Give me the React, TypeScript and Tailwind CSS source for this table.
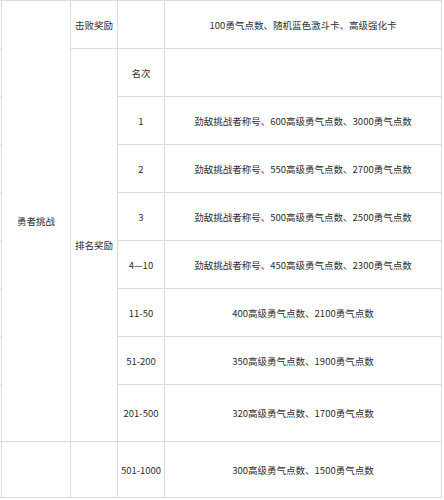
import React from "react";

const font = {
  fontFamily: '"Noto Sans CJK SC", "Noto Sans", "Liberation Sans", sans-serif',
};

const cell = "bg-white flex items-center justify-center text-[9.5px] leading-[14px] text-[#2e2e2e] text-center";

const ranks: [string, string][] = [
  ["1", "劲敌挑战者称号、600高级勇气点数、3000勇气点数"],
  ["2", "劲敌挑战者称号、550高级勇气点数、2700勇气点数"],
  ["3", "劲敌挑战者称号、500高级勇气点数、2500勇气点数"],
  ["4—10", "劲敌挑战者称号、450高级勇气点数、2300勇气点数"],
  ["11-50", "400高级勇气点数、2100勇气点数"],
  ["51-200", "350高级勇气点数、1900勇气点数"],
  ["201-500", "320高级勇气点数、1700勇气点数"],
];

export default function App() {
  return (
    <div className="w-[444px] h-[500px] bg-white" style={font}>
      <div className="grid w-fit grid-cols-[1px_68px_46px_46px_276px] grid-rows-[repeat(8,47px)_56px_55px] gap-px bg-[#dcdcdc] pt-px pr-px pb-px">
        {/* row 1 */}
        <div className="bg-white" />
        <div className={`${cell} row-span-9`}>勇者挑战</div>
        <div className={cell}>击败奖励</div>
        <div className="bg-white" />
        <div className={cell}>100勇气点数、随机蓝色激斗卡、高级强化卡</div>
        {/* row 2 */}
        <div className="bg-white" />
        <div className={`${cell} row-span-8`}>排名奖励</div>
        <div className={cell}>名次</div>
        <div className="bg-white" />
        {ranks.map(([r, t]) => (
          <React.Fragment key={r}>
            <div className="bg-white" />
            <div className={cell}>{r}</div>
            <div className={cell}>{t}</div>
          </React.Fragment>
        ))}
        {/* row 10 */}
        <div className="bg-white" />
        <div className="bg-white" />
        <div className="bg-white" />
        <div className={cell}>501-1000</div>
        <div className={cell}>300高级勇气点数、1500勇气点数</div>
      </div>
    </div>
  );
}
